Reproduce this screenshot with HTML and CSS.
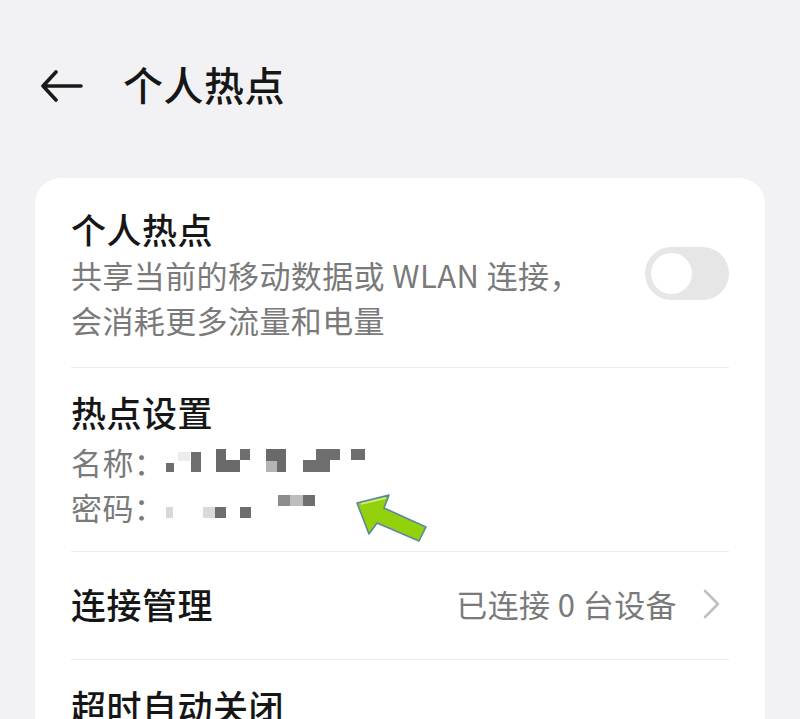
FILE: index.html
```html
<!DOCTYPE html>
<html lang="zh-CN">
<head>
<meta charset="utf-8">
<link rel="stylesheet" href="styles.css">
</head>
<body>
<header class="topbar">
  <svg class="back" width="42" height="32" viewBox="0 0 42 32">
    <path d="M15 2 L2 16 L15 30 M2 16 H40" fill="none" stroke="#1a1a1a" stroke-width="3.6" stroke-linecap="round" stroke-linejoin="round"/>
  </svg>
  <h1 class="page-title">个人热点</h1>
</header>

<main class="card">
  <section class="item item-switch">
    <div class="item-text">
      <div class="item-title">个人热点</div>
      <div class="item-sub">共享当前的移动数据或 WLAN 连接，<br>会消耗更多流量和电量</div>
    </div>
    <div class="toggle"><span class="knob"></span></div>
  </section>

  <section class="item item-settings">
    <div class="item-title title-gap">热点设置</div>
    <div class="info-row">
      <span class="info-label">名称：</span>
      <svg class="mosaic" width="200" height="26" viewBox="0 0 200 26">
        <rect x="0" y="14" width="8" height="9" fill="#6e6e6e"/>
        <rect x="12" y="3" width="12" height="9" fill="#ececec"/>
        <rect x="25" y="3" width="10" height="20" fill="#6e6e6e"/>
        <rect x="50" y="0" width="10" height="23" fill="#6a6a6a"/>
        <rect x="60" y="11" width="14" height="12" fill="#6a6a6a"/>
        <rect x="74" y="0" width="10" height="11" fill="#6e6e6e"/>
        <rect x="100" y="0" width="20" height="23" fill="#6a6a6a"/>
        <rect x="100" y="12" width="11" height="11" fill="#b5b5b5"/>
        <rect x="137" y="11" width="27" height="12" fill="#6e6e6e"/>
        <rect x="150" y="0" width="24" height="11" fill="#6e6e6e"/>
        <rect x="185" y="0" width="14" height="11" fill="#6e6e6e"/>
      </svg>
    </div>
    <div class="info-row">
      <span class="info-label">密码：</span>
      <svg class="mosaic" width="200" height="26" viewBox="0 0 200 26">
        <rect x="-3" y="1" width="3" height="5" fill="#a8a8a8"/>
        <rect x="0" y="13" width="7" height="11" fill="#d8d8d8"/>
        <rect x="37" y="13" width="12" height="11" fill="#dadada"/>
        <rect x="49" y="13" width="11" height="11" fill="#6e6e6e"/>
        <rect x="74" y="13" width="11" height="11" fill="#6e6e6e"/>
        <rect x="112" y="1" width="12" height="11" fill="#8c8c8c"/>
        <rect x="124" y="1" width="13" height="11" fill="#bdbdbd"/>
        <rect x="137" y="1" width="12" height="11" fill="#6e6e6e"/>
      </svg>
    </div>
    <svg class="pointer" width="80" height="56" viewBox="0 0 80 56">
      <polygon points="4,17 36,9 31,22 73,41 66,55 24,37 16,48" fill="#93d10c" stroke="#5c86a8" stroke-width="1.6" stroke-linejoin="round"/>
      <polyline points="8,18 33,12" fill="none" stroke="#d8f27a" stroke-width="1.5"/>
    </svg>
  </section>

  <section class="item item-row">
    <div class="item-title">连接管理</div>
    <div class="row-right">
      <span class="row-value">已连接 0 台设备</span>
      <svg class="chevron" width="18" height="30" viewBox="0 0 18 30">
        <path d="M2 2 L15 15 L2 28" fill="none" stroke="#bfbfbf" stroke-width="2.6" stroke-linecap="round" stroke-linejoin="round"/>
      </svg>
    </div>
  </section>

  <section class="item item-last">
    <div class="item-title">超时自动关闭</div>
  </section>
</main>
</body>
</html>
```

FILE: styles.css
```css
* { box-sizing: border-box; }

html, body {
  margin: 0;
  padding: 0;
}

body {
  background: #f2f2f4;
  font-family: "Noto Sans CJK SC", "Noto Sans", sans-serif;
  color: #161616;
  width: 800px;
  height: 719px;
  overflow: hidden;
}

.topbar {
  display: flex;
  align-items: center;
  height: 178px;
  padding: 0 0 10px 41px;
}

.back {
  display: block;
  flex: none;
  position: relative;
  top: 2px;
}

.page-title {
  margin: 0 0 0 40px;
  font-size: 40px;
  font-weight: 500;
  line-height: 56px;
  letter-spacing: 0.5px;
}

.card {
  margin: 0 35px;
  background: #ffffff;
  border-radius: 26px;
  padding: 0 36px;
}

.item {
  border-bottom: 1px solid #ececec;
}

.item-title {
  font-size: 35px;
  font-weight: 500;
  line-height: 46px;
  letter-spacing: 0.5px;
}

.item-sub,
.info-row {
  font-size: 31px;
  line-height: 45px;
  color: #7a7a7a;
  letter-spacing: 0.4px;
}

.item-switch {
  display: flex;
  align-items: center;
  justify-content: space-between;
  padding: 28px 0 25px;
}

.toggle {
  width: 84px;
  height: 53px;
  border-radius: 27px;
  background: #e6e6e6;
  padding: 6px;
  flex: none;
  margin-bottom: 2px;
}

.knob {
  display: block;
  width: 41px;
  height: 41px;
  border-radius: 50%;
  background: #ffffff;
}

.item-settings {
  position: relative;
  padding: 21px 0 22px;
}

.title-gap {
  margin-bottom: 4px;
}

.info-row {
  display: flex;
  align-items: center;
  height: 45px;
}

.mosaic {
  display: block;
  margin-left: 1px;
}

.pointer {
  position: absolute;
  left: 282px;
  top: 118px;
}

.item-row {
  display: flex;
  align-items: center;
  justify-content: space-between;
  height: 108px;
  padding-bottom: 4px;
}

.row-right {
  display: flex;
  align-items: center;
  gap: 26px;
  padding-right: 8px;
}

.row-value {
  font-size: 31px;
  color: #7a7a7a;
  letter-spacing: 0.4px;
}

.chevron {
  display: block;
}

.item-last {
  border-bottom: none;
  padding-top: 23px;
  height: 120px;
}
```
